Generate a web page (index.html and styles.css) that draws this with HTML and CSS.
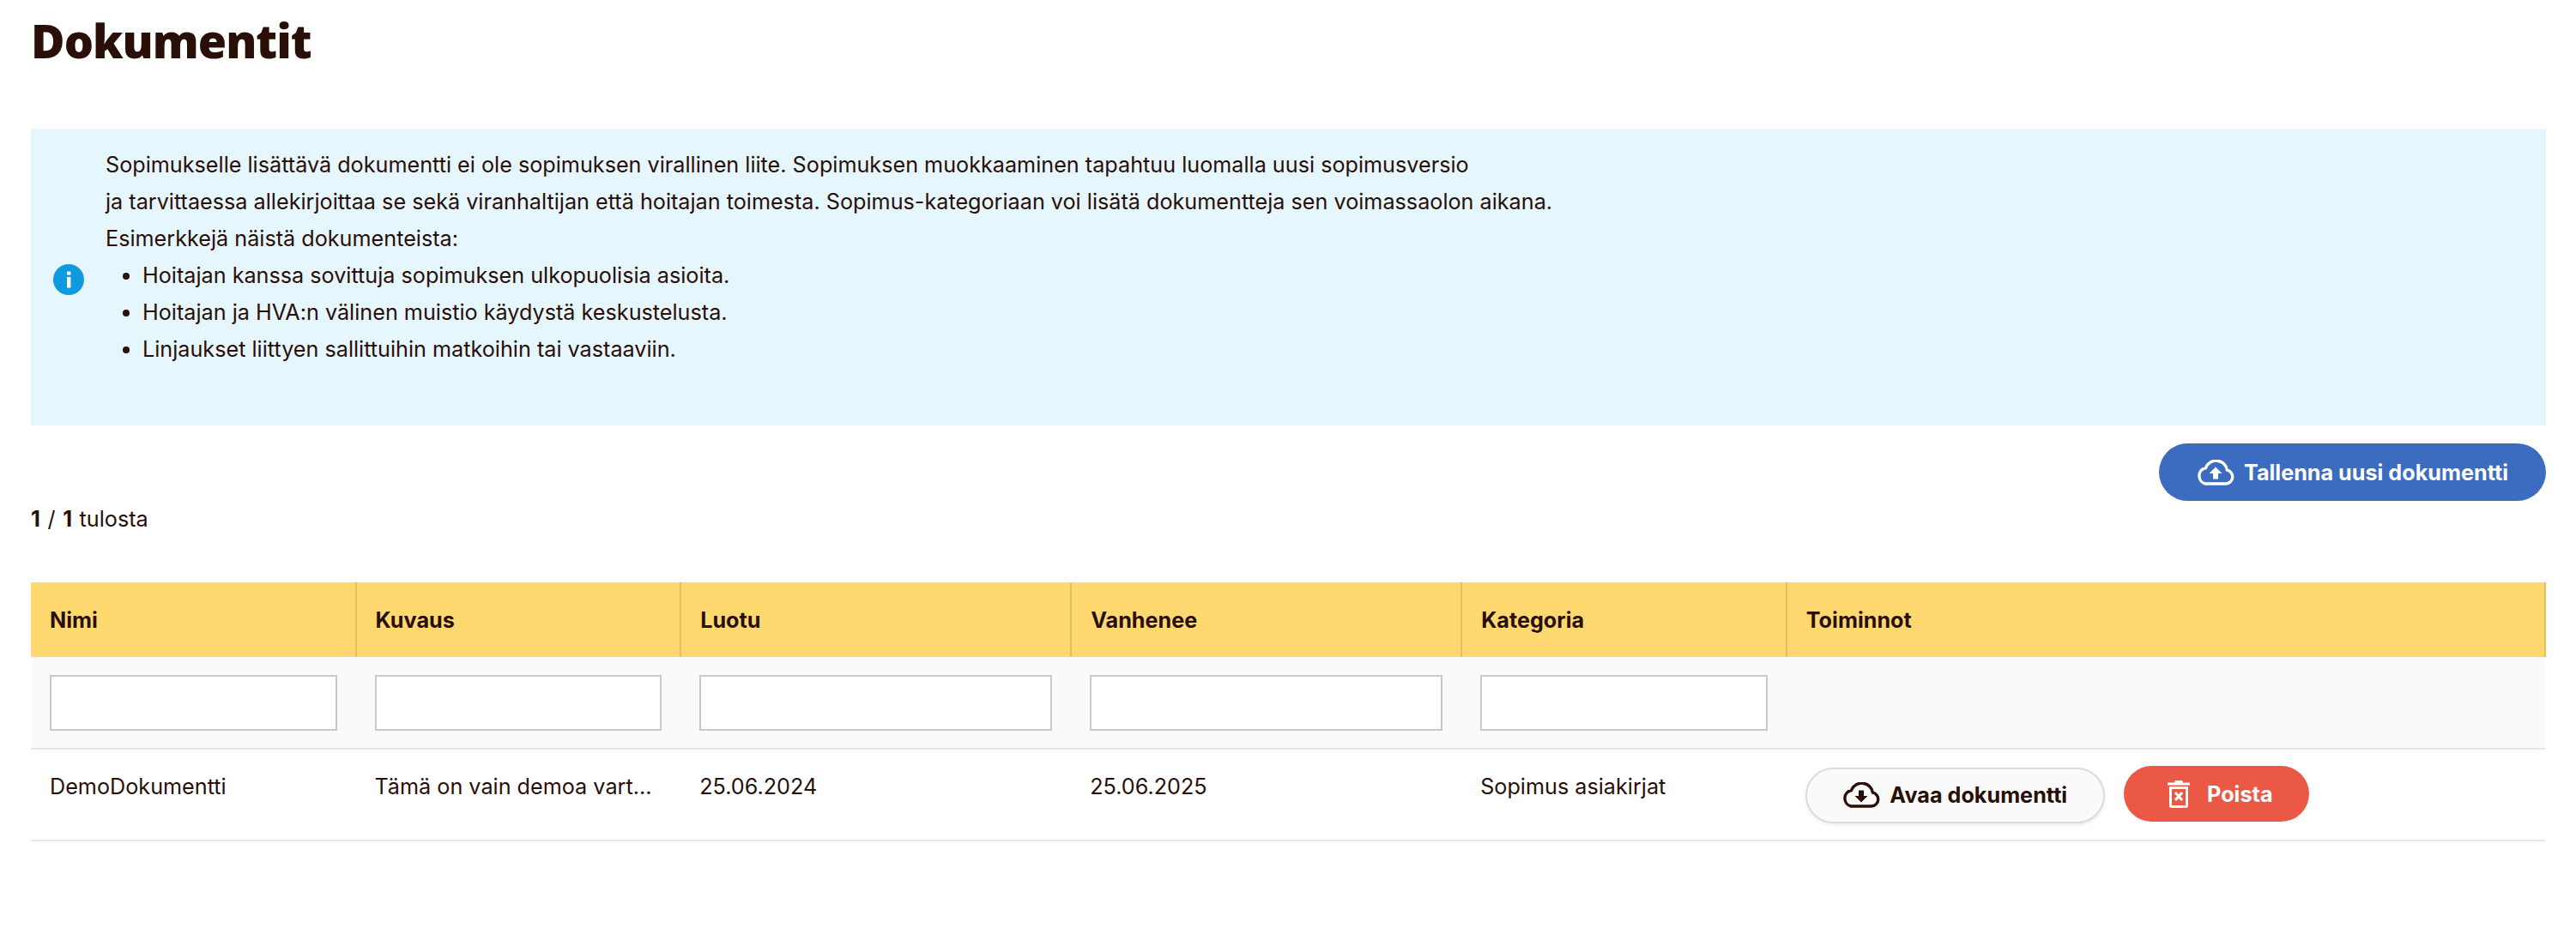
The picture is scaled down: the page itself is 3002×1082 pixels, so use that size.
FILE: index.html
```html
<!DOCTYPE html>
<html lang="fi">
<head>
<meta charset="utf-8">
<title>Dokumentit</title>
<link rel="stylesheet" href="styles.css">
</head>
<body>
<main class="page">
  <h1 class="title">Dokumentit</h1>
  <section class="notice">
    <svg class="notice-icon" viewBox="0 0 36 36" aria-hidden="true"><circle cx="18" cy="18" r="18" fill="#0f9ae0"/><rect x="16" y="15" width="4.4" height="12.5" fill="#fff"/><rect x="16" y="8.6" width="4.4" height="4" fill="#fff"/></svg>
    <div class="notice-text">
      <p>Sopimukselle lisättävä dokumentti ei ole sopimuksen virallinen liite. Sopimuksen muokkaaminen tapahtuu luomalla uusi sopimusversio</p>
      <p>ja tarvittaessa allekirjoittaa se sekä viranhaltijan että hoitajan toimesta. Sopimus-kategoriaan voi lisätä dokumentteja sen voimassaolon aikana.</p>
      <p>Esimerkkejä näistä dokumenteista:</p>
      <ul>
        <li>Hoitajan kanssa sovittuja sopimuksen ulkopuolisia asioita.</li>
        <li>Hoitajan ja HVA:n välinen muistio käydystä keskustelusta.</li>
        <li>Linjaukset liittyen sallittuihin matkoihin tai vastaaviin.</li>
      </ul>
    </div>
  </section>
  <div class="toolbar">
    <button class="btn btn-blue" type="button">
      <svg class="cloud" viewBox="0 0 44 30" aria-hidden="true"><path d="M10 28h24a8 8 0 0 0 1.500-15.800A13 13 0 0 0 10.500 9.500 9.500 9.500 0 0 0 10 28z" fill="none" stroke="currentColor" stroke-width="3.400"/><path d="M22 8.500l7.500 7.500h-4.500v6.500h-6V16h-4.500z" fill="currentColor"/></svg>
      Tallenna uusi dokumentti
    </button>
  </div>
  <p class="count"><b>1</b> / <b>1</b> tulosta</p>
  <table class="grid">
    <colgroup><col class="c1"><col class="c1"><col class="c2"><col class="c2"><col class="c1"><col></colgroup>
    <thead>
      <tr class="head"><th>Nimi</th><th>Kuvaus</th><th>Luotu</th><th>Vanhenee</th><th>Kategoria</th><th>Toiminnot</th></tr>
      <tr class="filters"><td><input class="filter" type="text"></td><td><input class="filter" type="text"></td><td><input class="filter" type="text"></td><td><input class="filter" type="text"></td><td><input class="filter" type="text"></td><td></td></tr>
    </thead>
    <tbody>
      <tr class="row">
        <td>DemoDokumentti</td><td>Tämä on vain demoa vart...</td><td>25.06.2024</td><td>25.06.2025</td><td>Sopimus asiakirjat</td>
        <td class="actions">
          <button class="btn btn-light" type="button">
            <svg class="cloud" viewBox="0 0 44 30" aria-hidden="true"><path d="M10 28h24a8 8 0 0 0 1.500-15.800A13 13 0 0 0 10.500 9.500 9.500 9.500 0 0 0 10 28z" fill="none" stroke="currentColor" stroke-width="3.400"/><path d="M22 23.500l7.500-7.500h-4.500V9.500h-6V16h-4.500z" fill="currentColor"/></svg>
            Avaa dokumentti
          </button>
          <button class="btn btn-red" type="button">
            <svg class="trash" viewBox="0 0 26 33" aria-hidden="true"><path d="M0 3.500h8.500V1h9v2.500H26V6.500H0z" fill="currentColor"/><path d="M3.500 9.500h19v20.500a1.500 1.500 0 0 1-1.500 1.500H5a1.500 1.500 0 0 1-1.500-1.500z" fill="none" stroke="currentColor" stroke-width="3"/><path d="M9 15l8 9M17 15l-8 9" fill="none" stroke="currentColor" stroke-width="3"/></svg>
            Poista
          </button>
        </td>
      </tr>
    </tbody>
  </table>
</main>
</body>
</html>
```
FILE: styles.css
```css
* { box-sizing: border-box; }
html, body { margin: 0; background: #fff; }
body { font-family: Inter, "Liberation Sans", sans-serif; color: #2a0f09; font-size: 25.2px; }
.page { padding: 0 35px 0 36px; height: 1082px; overflow: hidden; }
.title { margin: 0; padding-top: 14px; height: 150px; font-family: "Noto Sans", sans-serif; font-weight: 900; font-size: 54px; line-height: 66px; letter-spacing: -1px; }
.notice { display: flex; align-items: center; height: 346px; background: #e6f6fd; padding: 0 0 46px 26px; }
.notice-icon { width: 36px; height: 36px; flex: none; margin-right: 25px; margin-top: 52px; }
.notice-text p { margin: 0; line-height: 43px; }
.notice-text ul { margin: 0; padding: 0 0 0 43px; }
.notice-text li { line-height: 43px; }
.toolbar { display: flex; justify-content: flex-end; padding-top: 21px; }
.btn { display: inline-flex; align-items: center; justify-content: center; border-radius: 34px; border: 0; font-family: Inter, sans-serif; font-weight: 700; font-size: 25.2px; }
.btn-blue { width: 451px; height: 67px; background: #3b6cc0; color: #fff; }
.cloud { width: 44px; height: 30px; margin-right: 11px; }
.count { margin: 7px 0 0; line-height: 29px; height: 88px; word-spacing: 1.5px; }
.grid { width: 100%; table-layout: fixed; border-collapse: collapse; }
.c1 { width: 378.6px; }
.c2 { width: 455px; }
.head th { height: 87px; background: #ffd970; text-align: left; font-weight: 700; padding: 0 22px; border-right: 2px solid #e3bf64; }
.filters td { height: 107px; background: #fafafa; padding: 0 22px; border-bottom: 2px solid #e6e6e6; }
.filter { display: block; width: 100%; height: 65px; background: #fff; border: 2px solid #c9c9c9; border-radius: 0; }
.row td { height: 107px; padding: 0 22px 20px; border-bottom: 2px solid #e6e6e6; white-space: nowrap; overflow: hidden; }
.row td.actions { padding: 0 22px; }
.actions { font-size: 0; }
.btn-light { width: 349px; height: 65px; background: #fafafa; color: #2a0f09; border: 2px solid #dcdcdc; box-shadow: 0 2px 4px rgba(0,0,0,.08); }
.btn-red { width: 216px; height: 65px; margin-left: 22px; padding: 0 0 0 9px; background: #ec5846; color: #fff; }
.trash { width: 26px; height: 33px; margin-right: 20px; }
```
